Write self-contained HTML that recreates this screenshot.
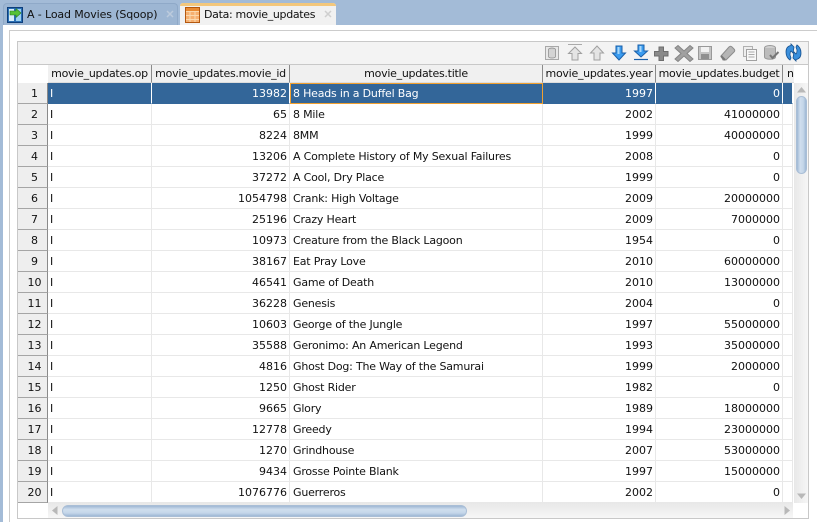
<!DOCTYPE html>
<html><head><meta charset="utf-8"><style>
html,body{margin:0;padding:0}
body{width:817px;height:522px;position:relative;overflow:hidden;background:#a3bbd7;font:11px "DejaVu Sans",sans-serif;color:#111}
div{position:absolute;box-sizing:border-box}
.h{top:65px;height:18px;background:#f0f0f0;border-right:1px solid #8a8a8a;border-bottom:1px solid #ddd;line-height:18px;text-align:center;white-space:nowrap;overflow:hidden;color:#111;letter-spacing:-.27px}
table{position:absolute;left:18px;top:83px;border-collapse:separate;border-spacing:0;table-layout:fixed;width:775px}
td{height:21px;box-sizing:border-box;padding:1px 2px 0 2px;border-right:1px solid #e8e8e8;border-bottom:1px solid #e8e8e8;white-space:nowrap;overflow:hidden;font-size:11px;background:#fff}
td.n{background:#eee;border-right:1px solid #8a8a8a;border-bottom:1px solid #a5a5a5;text-align:center;padding:1px 0 0 4px;color:#111}
td.r{text-align:right}
td.t{padding-left:3px;letter-spacing:-.2px}
tr.s td:not(.n){background:#336699;color:#fff;border-right:1px solid #fff;border-bottom:1px solid #336699}
tr.s td.f{border:1px solid #f0a030;padding:0 2px}
</style></head><body>
<div style="left:3px;top:25px;width:814px;height:497px;background:#fff"></div>
<div style="left:0;top:0;width:817px;height:25px;background:#a3bbd7"></div>
<div style="left:3px;top:3px;width:175px;height:22px;background:#9db6d3;border:1px solid #8fa9c8;border-bottom:0;border-radius:4px 4px 0 0"></div>
<div style="left:180px;top:3px;width:156px;height:22px;background:#f1f1f1;border-radius:3px 3px 0 0;overflow:hidden"><div style="left:0;top:0;width:156px;height:3px;background:#f3c77c"></div></div>
<div style="left:27px;top:7px;line-height:16px;white-space:nowrap;letter-spacing:-.12px">A - Load Movies (Sqoop)</div>
<div style="left:204px;top:7px;line-height:16px;white-space:nowrap;letter-spacing:-.32px">Data: movie_updates</div>
<svg style="position:absolute;left:166px;top:10px" width="8" height="8"><path d="M1 1l6 6M7 1L1 7" stroke="#bccbdd" stroke-width="1.500"/></svg>
<svg style="position:absolute;left:324px;top:10px" width="8" height="8"><path d="M1 1l6 6M7 1L1 7" stroke="#cfcfcf" stroke-width="1.500"/></svg>
<svg style="position:absolute;left:7px;top:6px" width="17" height="18" viewBox="0 0 17 18"><rect x=".5" y="1.5" width="15" height="15" fill="#2a6fb5" stroke="#0e3f7c"/><rect x="2" y="3" width="5" height="12" fill="#d6ecfa"/><rect x="9" y="3" width="5" height="12" fill="#9bd0f0"/><path d="M3 5h6V2.500L14 7l-5 4.500V9H3z" fill="#55c238" stroke="#2a7a1c" stroke-width=".6"/></svg>
<svg style="position:absolute;left:185px;top:7px" width="15" height="16" viewBox="0 0 15 16"><rect x=".5" y=".5" width="14" height="15" fill="#f6b070" stroke="#b4580f"/><path d="M1 4.500h13M1 8.500h13M1 12.500h13M5 4v11M10 4v11" stroke="#fbd9ae"/><rect x="1" y="1" width="13" height="3" fill="#e98a32"/></svg>

<div style="left:9px;top:30px;width:808px;height:492px;border-left:1px solid #ccc;border-top:1px solid #ccc;border-bottom:0"></div>
<div style="left:17px;top:41px;width:792px;height:478px;border:1px solid #c8c8c8"></div>
<div style="left:18px;top:42px;width:790px;height:23px;background:#f3f3f3;border-bottom:1px solid #c8c8c8"></div>

<svg style="position:absolute;left:540px;top:42px" width="268" height="22" viewBox="540 42 268 22">
<rect x="545.500" y="46.500" width="13" height="13" fill="#e8e8e8" stroke="#a8a8a8"/><ellipse cx="552" cy="49.500" rx="3.500" ry="1.500" fill="#ccc" stroke="#888" stroke-width=".7"/><path d="M548.500 49.500v7c0 2 7 2 7 0v-7" fill="#d4d4d4" stroke="#888" stroke-width=".7"/>
<path d="M568 44.500h14" stroke="#aaa"/><path d="M575 47l6.500 6.500H578V60h-6v-6.500h-3.500z" fill="#e4e4e4" stroke="#a0a0a0"/>
<path d="M597 46l6.500 7H600v7h-6v-7h-3.500z" fill="#e4e4e4" stroke="#a0a0a0"/>
<path d="M616 46h6v7h3.500l-6.500 7-6.500-7h3.500z" fill="#3b9cf0" stroke="#1a5fa8"/><path d="M617.500 47h2v7h-2z" fill="#a8d8fa"/>
<path d="M638 45h6v6h3.500l-6.500 6-6.500-6h3.500z" fill="#3b9cf0" stroke="#1a5fa8"/><path d="M639.500 46h2v6h-2z" fill="#a8d8fa"/><path d="M634 59.500h14" stroke="#1a5fa8" stroke-width="1.200"/>
<path d="M659 47h4.500v4.500h4.500v4.500h-4.500v4.500H659V56h-4.500v-4.500H659z" fill="#8a8a8a" stroke="#6e6e6e"/>
<path d="M678 47l6 5.500 6-5.500 3 2.500-6 5.500 6 5.500-3 2.500-6-5.500-6 5.500-3-2.500 6-5.500-6-5.500z" fill="#a0a0a0" stroke="#858585" transform="translate(0 -1.500)"/>
<rect x="698.500" y="46.500" width="13" height="13" fill="#c4c4c4" stroke="#999"/><rect x="701" y="47" width="8" height="5" fill="#f2f2f2"/><rect x="701" y="54" width="8" height="5" fill="#8f8f8f"/>
<path d="M721 56l8-9c1-1 2-1 3 0l2 2c1 1 1 2 0 3l-8 8h-3z" fill="#b5b5b5" stroke="#8c8c8c"/><path d="M721 56l4 4" stroke="#777" stroke-width="2"/>
<rect x="743.500" y="46.500" width="9" height="10" fill="#eee" stroke="#b0b0b0"/><rect x="746.500" y="49.500" width="10" height="11" fill="#f8f8f8" stroke="#a0a0a0"/><path d="M748.500 52h6M748.500 54.500h6M748.500 57h6" stroke="#aaa"/>
<ellipse cx="770" cy="48" rx="5.500" ry="2.500" fill="#d0d0d0" stroke="#999"/><path d="M764.500 48v9c0 3 11 3 11 0v-9" fill="#bcbcbc" stroke="#999"/><path d="M770 55l2.500 3 6-6" fill="none" stroke="#777" stroke-width="2"/>
<path d="M786 52c0-4 2-6 5-6.500V44l3 3-1 6-2-2c-1 1-1 2-1 4l1 3-1 2c-3-2-4-5-4-8z" fill="#3a8fdc" stroke="#14508f" stroke-width=".8"/><path d="M801 53c0 4-2 6-5 6.500V61l-3-3 1-6 2 2c1-1 1-2 1-4l-1-3 1-2c3 2 4 5 4 8z" fill="#3a8fdc" stroke="#14508f" stroke-width=".8"/>
</svg>

<div style="left:18px;top:65px;width:30px;height:18px;background:#fff"></div>
<div class="h" style="left:48px;width:104px">movie_updates.op</div>
<div class="h" style="left:152px;width:138px">movie_updates.movie_id</div>
<div class="h" style="left:290px;width:253px">movie_updates.title</div>
<div class="h" style="left:543px;width:113px">movie_updates.year</div>
<div class="h" style="left:656px;width:127px">movie_updates.budget</div>
<div class="h" style="left:783px;width:11px;text-align:left;padding-left:4px;border-right:0">n</div>

<table><colgroup><col style="width:30px"><col style="width:104px"><col style="width:138px"><col style="width:253px"><col style="width:113px"><col style="width:127px"><col style="width:10px"></colgroup>
<tr class="s"><td class="n">1</td><td>I</td><td class="r">13982</td><td class="t f">8 Heads in a Duffel Bag</td><td class="r">1997</td><td class="r">0</td><td></td></tr>
<tr><td class="n">2</td><td>I</td><td class="r">65</td><td class="t">8 Mile</td><td class="r">2002</td><td class="r">41000000</td><td></td></tr>
<tr><td class="n">3</td><td>I</td><td class="r">8224</td><td class="t">8MM</td><td class="r">1999</td><td class="r">40000000</td><td></td></tr>
<tr><td class="n">4</td><td>I</td><td class="r">13206</td><td class="t">A Complete History of My Sexual Failures</td><td class="r">2008</td><td class="r">0</td><td></td></tr>
<tr><td class="n">5</td><td>I</td><td class="r">37272</td><td class="t">A Cool, Dry Place</td><td class="r">1999</td><td class="r">0</td><td></td></tr>
<tr><td class="n">6</td><td>I</td><td class="r">1054798</td><td class="t">Crank: High Voltage</td><td class="r">2009</td><td class="r">20000000</td><td></td></tr>
<tr><td class="n">7</td><td>I</td><td class="r">25196</td><td class="t">Crazy Heart</td><td class="r">2009</td><td class="r">7000000</td><td></td></tr>
<tr><td class="n">8</td><td>I</td><td class="r">10973</td><td class="t">Creature from the Black Lagoon</td><td class="r">1954</td><td class="r">0</td><td></td></tr>
<tr><td class="n">9</td><td>I</td><td class="r">38167</td><td class="t">Eat Pray Love</td><td class="r">2010</td><td class="r">60000000</td><td></td></tr>
<tr><td class="n">10</td><td>I</td><td class="r">46541</td><td class="t">Game of Death</td><td class="r">2010</td><td class="r">13000000</td><td></td></tr>
<tr><td class="n">11</td><td>I</td><td class="r">36228</td><td class="t">Genesis</td><td class="r">2004</td><td class="r">0</td><td></td></tr>
<tr><td class="n">12</td><td>I</td><td class="r">10603</td><td class="t">George of the Jungle</td><td class="r">1997</td><td class="r">55000000</td><td></td></tr>
<tr><td class="n">13</td><td>I</td><td class="r">35588</td><td class="t">Geronimo: An American Legend</td><td class="r">1993</td><td class="r">35000000</td><td></td></tr>
<tr><td class="n">14</td><td>I</td><td class="r">4816</td><td class="t">Ghost Dog: The Way of the Samurai</td><td class="r">1999</td><td class="r">2000000</td><td></td></tr>
<tr><td class="n">15</td><td>I</td><td class="r">1250</td><td class="t">Ghost Rider</td><td class="r">1982</td><td class="r">0</td><td></td></tr>
<tr><td class="n">16</td><td>I</td><td class="r">9665</td><td class="t">Glory</td><td class="r">1989</td><td class="r">18000000</td><td></td></tr>
<tr><td class="n">17</td><td>I</td><td class="r">12778</td><td class="t">Greedy</td><td class="r">1994</td><td class="r">23000000</td><td></td></tr>
<tr><td class="n">18</td><td>I</td><td class="r">1270</td><td class="t">Grindhouse</td><td class="r">2007</td><td class="r">53000000</td><td></td></tr>
<tr><td class="n">19</td><td>I</td><td class="r">9434</td><td class="t">Grosse Pointe Blank</td><td class="r">1997</td><td class="r">15000000</td><td></td></tr>
<tr><td class="n">20</td><td>I</td><td class="r">1076776</td><td class="t">Guerreros</td><td class="r">2002</td><td class="r">0</td><td></td></tr>
</table>

<div style="left:794px;top:83px;width:14px;height:420px;background:linear-gradient(90deg,#e8e8e8,#f6f6f6)"></div>
<div style="left:796px;top:96px;width:11px;height:78px;border-radius:6px;background:linear-gradient(90deg,#9fb8d4,#cfdeee 35%,#c4d6e9 70%,#9fb8d4);border:1px solid #a9bed6"></div>
<svg style="position:absolute;left:796px;top:86px" width="11" height="8"><path d="M1 6.500L5.500 1 10 6.500z" fill="#b8b8b8"/></svg>
<svg style="position:absolute;left:796px;top:492px" width="11" height="8"><path d="M1 1.500L5.500 7 10 1.500z" fill="#b8b8b8"/></svg>
<div style="left:48px;top:503px;width:745px;height:15px;background:linear-gradient(#e8e8e8,#f6f6f6)"></div>
<div style="left:62px;top:505px;width:405px;height:12px;border-radius:6px;background:linear-gradient(#9fb8d4,#cfdeee 35%,#c4d6e9 70%,#9fb8d4);border:1px solid #a9bed6"></div>
<svg style="position:absolute;left:51px;top:505px" width="8" height="11"><path d="M6.500 1L1 5.500 6.500 10z" fill="#b8b8b8"/></svg>
<svg style="position:absolute;left:783px;top:505px" width="8" height="11"><path d="M1.500 1L7 5.500 1.500 10z" fill="#b8b8b8"/></svg>
</body></html>
